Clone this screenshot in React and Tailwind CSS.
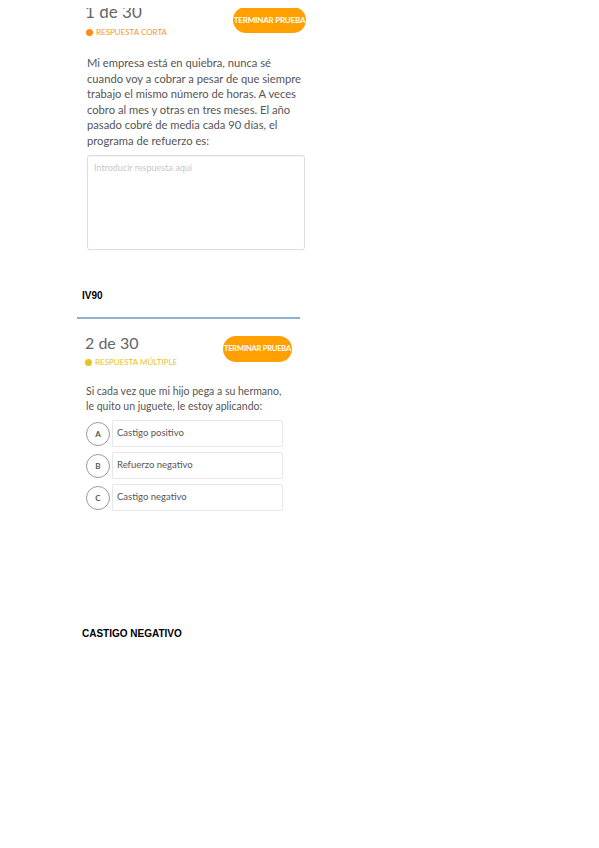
import React from 'react';

const Option = ({ letter, text }) => (
  <div className="flex items-center gap-[2px] h-[27px]">
    <div className="w-[24px] h-[24px] rounded-full border border-[#999] flex items-center justify-center text-[8px] font-bold text-[#555]">
      {letter}
    </div>
    <div className="flex-1 h-[27px] border border-[#e6e6e6] rounded-[2px] flex items-center pl-[4px] text-[9.5px] text-[#555]">
      {text}
    </div>
  </div>
);

export default function App() {
  return (
    <div className="w-[599px] h-[848px] bg-white overflow-hidden" style={{ fontFamily: 'Lato, "Open Sans", sans-serif' }}>
      {/* first screenshot, cropped at the top */}
      <div className="mt-[8px] h-[250px] overflow-hidden">
        <div className="ml-[85px] w-[221px] -mt-[6px]">
          <div className="flex items-start">
            <div className="text-[17px] leading-[20px] text-[#666]">1 de 30</div>
            <div className="ml-auto mt-[5px] w-[73px] h-[26px] rounded-full bg-[#ffa000] text-white text-[8px] font-bold tracking-tight flex items-center justify-center whitespace-nowrap">
              TERMINAR PRUEBA
            </div>
          </div>
          <div className="flex items-center gap-[3px] -mt-[6px] ml-[1px] h-[10px]">
            <span className="w-[7px] h-[7px] rounded-full bg-[#ff8c1a]" />
            <span className="text-[8px] leading-[10px] text-[#f59a23]">RESPUESTA CORTA</span>
          </div>
          <p className="mt-[18px] ml-[2px] text-[11.2px] leading-[15.5px] text-[#555]">
            Mi empresa está en quiebra, nunca sé<br />
            cuando voy a cobrar a pesar de que siempre<br />
            trabajo el mismo número de horas. A veces<br />
            cobro al mes y otras en tres meses. El año<br />
            pasado cobré de media cada 90 días, el<br />
            programa de refuerzo es:
          </p>
          <textarea
            className="mt-[7px] ml-[2px] block w-[218px] h-[95px] border border-[#dcdcdc] rounded-[3px] px-[6px] py-[5px] text-[9px] resize-none outline-none placeholder:text-[#c8c8c8] shadow-[inset_0_1px_1px_rgba(0,0,0,0.04)]"
            placeholder="Introducir respuesta aquí"
          />
        </div>
      </div>

      <div className="ml-[82px] mt-[32px] text-[10px] leading-[12px] font-bold text-black" style={{ fontFamily: '"Liberation Sans", Arial, sans-serif' }}>
        IV90
      </div>

      <div className="ml-[77px] mt-[15px] w-[223px] h-[2px] bg-[#8eb1d0]" />

      {/* second screenshot */}
      <div className="ml-[85px] w-[207px] mt-[17px]">
        <div className="flex items-start">
          <div className="text-[16px] leading-[20px] text-[#666] -mt-[3px]">2 de 30</div>
          <div className="ml-auto w-[69px] h-[26px] rounded-full bg-[#ffa000] text-white text-[7.5px] font-bold tracking-tight flex items-center justify-center whitespace-nowrap">
            TERMINAR PRUEBA
          </div>
        </div>
        <div className="flex items-center gap-[3px] -mt-[5px] h-[10px]">
          <span className="w-[7px] h-[7px] rounded-full bg-[#e8c31a]" />
          <span className="text-[8px] leading-[10px] text-[#e8c31a]">RESPUESTA MÚLTIPLE</span>
        </div>
        <p className="mt-[17px] ml-[1px] text-[10.5px] leading-[15px] text-[#555]">
          Si cada vez que mi hijo pega a su hermano,<br />
          le quito un juguete, le estoy aplicando:
        </p>
        <div className="mt-[6px] ml-[1px] w-[197px] flex flex-col gap-[5px]">
          <Option letter="A" text="Castigo positivo" />
          <Option letter="B" text="Refuerzo negativo" />
          <Option letter="C" text="Castigo negativo" />
        </div>
      </div>

      <div className="ml-[82px] mt-[117px] text-[10px] leading-[12px] font-bold text-black" style={{ fontFamily: '"Liberation Sans", Arial, sans-serif' }}>
        CASTIGO NEGATIVO
      </div>
    </div>
  );
}
